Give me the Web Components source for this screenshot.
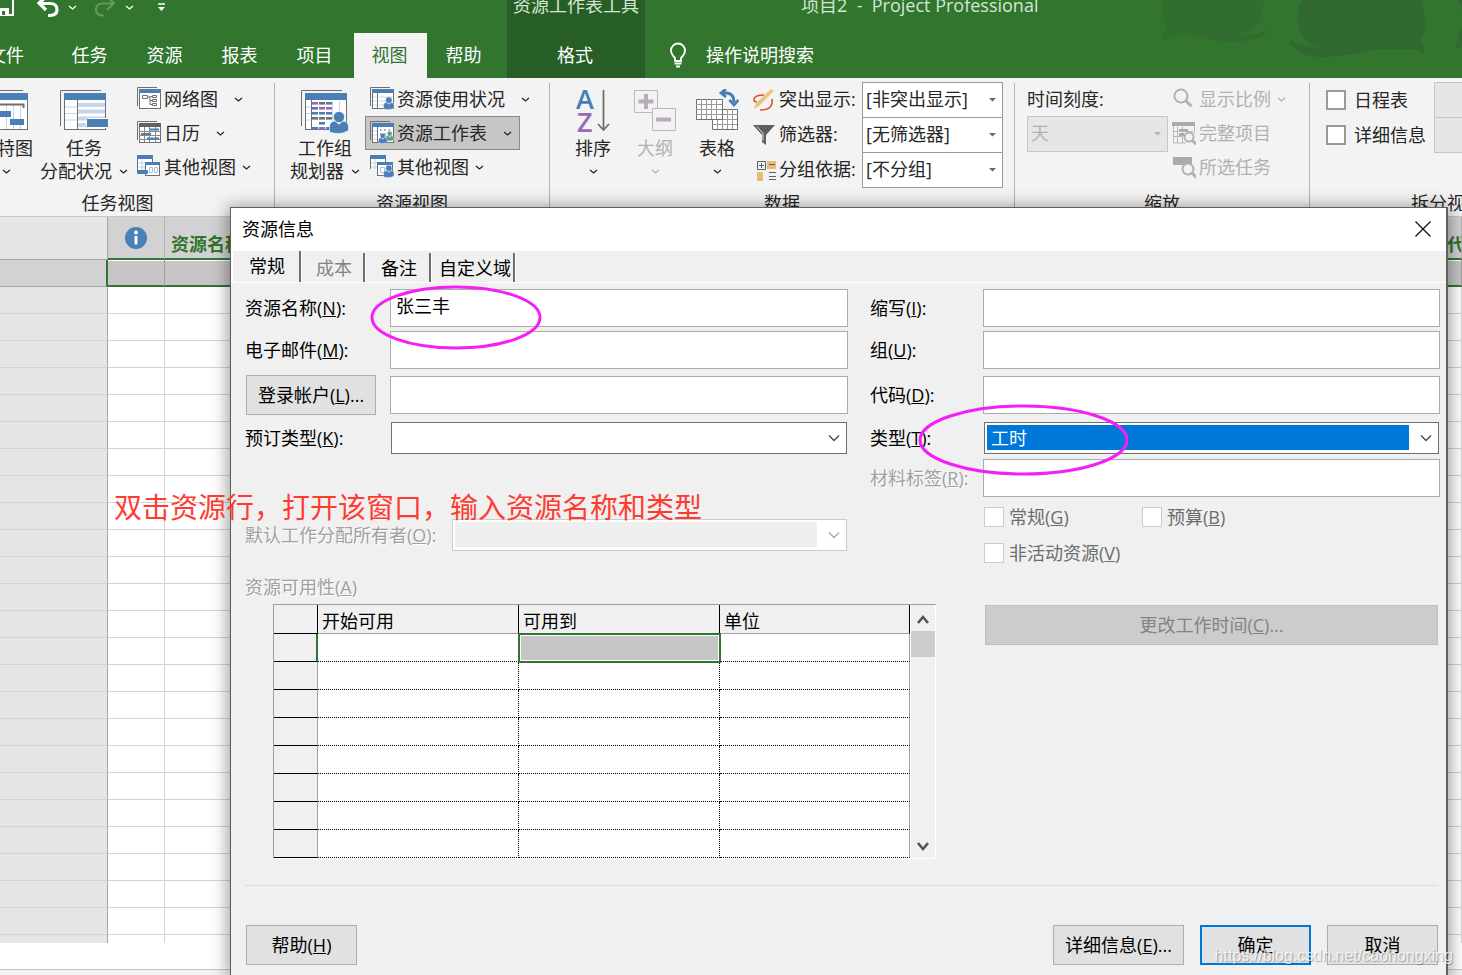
<!DOCTYPE html>
<html lang="zh-CN">
<head>
<meta charset="utf-8">
<title>项目2 - Project Professional</title>
<style>
  html, body { margin: 0; height: 100%; overflow: hidden; }
  body { font: 18px/24px "Open Sans", "Noto Sans CJK SC", sans-serif; color: #262626; background: #fff; }
</style>
</head>
<body>
<project-app></project-app>
<script>
const BLUE = '#4a7fb5', GREY = '#6f6f6f', PURPLE = '#9a68b8';
const person = (x, y, s, c) => `<g transform="translate(${x} ${y}) scale(${s})" fill="${c}" stroke="#fff" stroke-width=".6"><path d="M0 19V14Q0 8 6 8L9.500 11.500L13 8Q19 8 19 14V17.500Q14 20.500 9.500 20.500Q4 20.500 0 19Z"/><circle cx="9.500" cy="4" r="5.600"/></g>`;
const bigSheet = (inner, split = 17) => `<path d="M.5 37V1.500H41" fill="none" stroke="${GREY}"/><rect x="4.500" y="4.500" width="41" height="36" fill="#fff" stroke="${GREY}"/><path d="M5 18h${split - 5}M5 24.500h${split - 5}M5 31h${split - 5}" stroke="#c5d5ea"/><path d="M${split}.5 11V40" stroke="${GREY}"/>${inner}<path d="M4 4h42v7H4z" fill="${BLUE}"/>`;
const smallSheet = (inner, head = BLUE) => `<path d="M.5 19V.5H20" fill="none" stroke="${GREY}"/><rect x="2.500" y="2.500" width="21" height="19" fill="#fff" stroke="${GREY}"/>${inner}<path d="M2 2h22v4H2z" fill="${head}"/>`;
const lens = (x, y, r) => `<circle cx="${x}" cy="${y}" r="${r}" fill="#f3f3f3" stroke="#b1b1b1" stroke-width="2"/><path d="M${x + r * .7} ${y + r * .7}l${r * .9} ${r * .9}" stroke="#b1b1b1" stroke-width="3"/>`;
/* Coloured cells of the team planner, one letter per cell. */
const cells = ['pgb', 'bpp', 'bbb', 'ggg', '.b.', 'bpb'].map((row, r) => [...row].map((c, i) =>
  c === '.' ? '' : `<rect x="${11 + i * 7}" y="${13 + r * 5}" width="6" height="2.600" fill="${{ p: PURPLE, g: GREY, b: BLUE }[c]}"/>`).join('')).join('');

const ICONS = {
  save: [20, 20, `<path d="M1 1h17v17H4l-3-3z" fill="none" stroke="#fff" stroke-width="2"/><path d="M5 11h9v7H5z" fill="#fff"/><path d="M7 14h3v4H7z" fill="#31752f"/>`],
  undo: [24, 22, `<path d="M10 1L3 7l7 7M3 7.500h11q7 0 7 6t-7 6h-2" fill="none" stroke="#fff" stroke-width="3.200"/>`],
  redo: [24, 22, `<path d="M14 1l7 6-7 7M21 7.500H10Q3 7.500 3 13.500t7 6h1" fill="none" stroke="#5f9a5d" stroke-width="2.200"/>`],
  caret: [9, 9, `<path d="M1 3l3.500 3L8 3" fill="none" stroke="currentColor" stroke-width="1.300"/>`],
  chevron: [14, 14, `<path d="M2 4.500L7 9.500L12 4.500" fill="none" stroke="currentColor" stroke-width="1.300"/>`],
  triangle: [9, 9, `<path d="M1 3h7L4.500 6.500z" fill="currentColor"/>`],
  more: [9, 12, `<path d="M1 3h7" stroke="#fff" stroke-width="1.500"/><path d="M1 6h7L4.500 10z" fill="#fff"/>`],
  close: [18, 18, `<path d="M1.500 1.500l15 15M16.500 1.500l-15 15" stroke="#111" stroke-width="1.300"/>`],
  bulb: [18, 26, `<path d="M6 19v-3Q2 12 2 8.500A7 7 0 0 1 16 8.500Q16 12 12 16v3zM5.500 21.500h7M7 24.500h4" fill="none" stroke="#fff" stroke-width="1.800"/>`],
  info: [22, 22, `<circle cx="11" cy="11" r="11" fill="${BLUE}"/><circle cx="11" cy="5.500" r="1.900" fill="#fff"/><path d="M9.500 9h3v8.500h-3z" fill="#fff"/>`],
  gantt: [48, 44, bigSheet(`<path d="M24.500 15v25M31.500 15v25M38.500 15v25" stroke="#c5d5ea"/><path d="M8 18v-2.500h33.500V19" fill="none" stroke="${GREY}" stroke-width="2"/><rect x="14" y="22" width="15" height="6" fill="${BLUE}"/><rect x="28" y="30" width="14" height="6" fill="${BLUE}"/>`)],
  usage: [49, 44, bigSheet(`<path d="M18 16h27M18 22.500h27M18 29.500h27M18 36h27" stroke="#c5d5ea" stroke-width="4"/><rect x="26.500" y="29.500" width="22" height="9" rx="1" fill="${BLUE}" stroke="#fff"/>`)],
  planner: [49, 46, bigSheet(`<path d="M31.500 12v28M38.500 12v28" stroke="#c5d5ea"/>${cells}`, 10) + person(28.5, 24, 1, BLUE)],
  network: [24, 24, smallSheet(`<path d="M5.500 8.500h5v3h-5zM15.500 8.500h4v2h-4zM15.500 12.500h4v2h-4zM15.500 16.500h4v2h-4zM10.500 10h2.500v7.500h2.500M13 9.500h2.500M13 13.500h2.500" fill="none" stroke="${GREY}"/>`)],
  calendar: [24, 24, smallSheet(`<path d="M2 10.500h21M2 14.500h21M2 18.500h21M7.500 6v15M12.500 6v15M18.500 6v15" stroke="#888"/><path d="M12 8.500h10M4 13h10M10 17.500h12" stroke="${BLUE}" stroke-width="2"/>`, '#5f6368')],
  other: [24, 24, `<path d="M.5 17V.5H15.500V8" fill="#fff" stroke="${GREY}"/><path d="M0 0h16v4H0z" fill="${BLUE}"/><path d="M5 4v12M1 8h14M1 12h14" stroke="#c5d5ea"/><rect x="8.500" y="7.500" width="14" height="13" fill="#fff" stroke="${GREY}"/><path d="M8 7h15v3H8z" fill="${BLUE}"/><path d="M12.500 12.500h3v5h-3zM17.500 12.500h3v5h-3z" fill="none" stroke="#a9c0dc"/><rect y="15" width="11" height="4" rx="1" fill="${BLUE}"/>`],
  resusage: [24, 24, smallSheet(`<path d="M7.500 6v15" stroke="${GREY}"/><path d="M3 10h4M3 14h4M3 18h4M9 10h13M9 14h13M9 18h13" stroke="#c5d5ea"/>`) + person(13.5, 11, .56, BLUE)],
  ressheet: [24, 24, smallSheet(`<path d="M7.500 6v15" stroke="${GREY}"/><path d="M3 10h4M3 14h4M3 18h4" stroke="#c5d5ea"/><path d="M10 9h12M10 13h12" stroke="${GREY}" stroke-width="1.300" stroke-dasharray="1.300 3"/>`) + person(15.5, 11, .44, '#5fa287') + person(8.5, 13, .46, BLUE)],
  resother: [24, 24, `<path d="M.5 14V.5H15.500V8" fill="#fff" stroke="${GREY}"/><path d="M0 0h16v4H0z" fill="${BLUE}"/><path d="M5 4v10M1 8h14M1 12h14" stroke="#c5d5ea"/><rect x="7.500" y="7.500" width="15" height="13" fill="#fff" stroke="${GREY}"/><path d="M7 7h16v3H7z" fill="${BLUE}"/><path d="M10.500 12.500h4v5h-4z" fill="none" stroke="#a9c0dc"/>` + person(13.5, 11, .56, BLUE)],
  sort: [36, 46, `<text x="1" y="20" font-family="Open Sans, sans-serif" font-weight="600" font-size="27" fill="${BLUE}">A</text><text x="2" y="43" font-family="Open Sans, sans-serif" font-weight="600" font-size="27" fill="${PURPLE}">Z</text><path d="M28.500 1v40M23 35l5.500 6L34 35" fill="none" stroke="${GREY}" stroke-width="1.800"/>`],
  outline: [44, 46, `<g fill="#f6f0f6" stroke="#b9b9b9"><path d="M1.500 1.500h23v22h-23z"/><path d="M19.500 19.500h23v22h-23z"/></g><path d="M13 5v15M5.500 12.500h15M23 30.500h15" stroke="#b1b1b1" stroke-width="4"/>`],
  tables: [44, 46, `<path d="M17.500 20.500h25v20h-25z" fill="#fff" stroke="${GREY}"/><path d="M22.500 20v20M27.500 20v20M32.500 20v20M37.500 20v20M17 25.500h25M17 30.500h25M17 35.500h25" stroke="#999"/><path d="M1.500 10.500h26v20h-26z" fill="#fff" stroke="${GREY}"/><path d="M6.500 10v20M11.500 10v20M16.500 10v20M21.500 10v20M1 15.500h26M1 20.500h26M1 25.500h26" stroke="#999"/><path d="M27 4h5q7 1 7 9M31 0l-5 4 5 4M34.500 11l4.500 5 4.500-5" fill="none" stroke="${BLUE}" stroke-width="2.800"/>`],
  highlight: [24, 24, `<path d="M12 7Q2 7 2 12Q2 14 5 14M20 11Q22 22 8 22" fill="none" stroke="#d9532c" stroke-width="1.600"/><path d="M19 1l3 2L7 18l-5 3 2-6z" fill="#edc57c"/>`],
  filter: [24, 24, `<path d="M1 2h22L14 12v10l-4-3v-7z" fill="#5f5f5f"/><path d="M5 3.500l6 7v7" fill="none" stroke="#ddd"/>`],
  group: [24, 24, `<path d="M5.500 3.500h8v8h-8zM9.500 5v5M7 7.500h5M17 14.500h7M17 18.500h7M17 21.500h7" fill="none" stroke="#5f5f5f"/><path d="M15 3h9v8h-9zM5 14h6v9H5z" fill="#e8bd78"/><path d="M17 6.500h6" stroke="#5f5f5f"/>`],
  zoom: [24, 24, lens(9, 9, 6.5)],
  wholeproj: [24, 24, `<path d="M1.500 3v19H14M22.500 3v9M5.500 6v16M10.500 6v16M1 10.500h20M1 15.500h10" fill="none" stroke="#b9b9b9"/><path d="M0 1h23v4H0zM7 8h9v2H7zM7 12h5v3H7z" fill="#ababab"/>` + lens(17, 16, 4.5)],
  seltask: [24, 24, `<path d="M1 2h19v8H1z" fill="#ababab"/>` + lens(16, 14, 5.5)],
  scrollup: [26, 26, `<path d="M8 18l5-6 5 6" fill="none" stroke="#555" stroke-width="2.600"/>`],
  scrolldown: [26, 26, `<path d="M8 11l5 6 5-6" fill="none" stroke="#555" stroke-width="2.600"/>`]
};

/* Registers an element whose shadow root is rendered once from its attributes. */
function component(tag, css, html) {
  customElements.define(tag, class extends HTMLElement {
    connectedCallback() {
      if (this.shadowRoot) return;
      const t = document.createElement('template');
      t.innerHTML = `<style>*{box-sizing:border-box}button,input,select{font:inherit;color:inherit;margin:0;border-radius:0}${css}</style>` +
        (typeof html === 'function' ? html(n => this.getAttribute(n) || '', n => this.hasAttribute(n)) : html);
      this.attachShadow({ mode: 'open' }).append(t.content.cloneNode(true));
    }
  });
}
const keyed = (a) => `${a('label')}${a('key') ? `(<u>${a('key')}</u>)` : ''}${a('tail')}`;

component('ui-icon', ':host{display:block;flex:none;pointer-events:none}svg{display:block}', a => {
  const [w, h, body] = ICONS[a('name')];
  return `<svg width="${w}" height="${h}" viewBox="0 0 ${w} ${h}" aria-hidden="true">${body}</svg>`;
});

/* ---- ribbon ---- */
component('ribbon-tab', `
  :host{display:block;width:75px;flex:none}
  :host([first]){width:92px}
  :host([context]){width:138px}
  :host([active]){background:#f3f3f3;color:#31752f;width:73px;margin-left:1px}
  button{width:100%;height:45px;padding:0 2px 2px 0;border:0;background:none;white-space:nowrap}`,
  '<button type="button" role="tab"><slot></slot></button>');

component('app-header', `
  :host{display:block;position:relative;background:#31752f;color:#fff;flex:none}
  .title,.tabs{display:flex;position:relative}
  .title{height:33px;color:#d4e6d3}
  .quick{width:507px;display:flex;flex:none;height:22px;margin-top:-4px}
  .quick button{border:0;background:none;padding:0;display:flex;align-items:center;justify-content:flex-start;color:#fff}
  .b1{width:41px}.b2{width:32px}.b3{width:25px}.b4{width:32px}.b5{width:32px}
  .quick .b1{margin-left:-5px}
  .ctx{width:138px;flex:none;background:#275e26;text-align:center;white-space:nowrap}
  .ctx span,.doc span{display:block;margin-top:-7px}
  .doc{margin-left:156px;white-space:pre}
  .tabs{height:45px}
  nav{display:flex;margin-left:-39px;width:546px;flex:none}
  .dark{background:#275e26}
  .tell{display:flex;align-items:center;margin-left:24px;gap:19px;border:0;background:none;padding:0 0 2px}
  .art{position:absolute;right:0;top:0}`,
  `<svg class="art" width="302" height="78" viewBox="0 0 302 78" fill="#30682f" aria-hidden="true">
    <path opacity=".6" d="M4 0Q-1 18 8 27Q3 32 2 42Q12 32 36 37Q84 48 106 34Q112 30 106 31Q94 36 80 34Q106 28 103 0z"/>
    <path d="M140 4Q133 22 145 39Q150 45 162 47Q140 47 132 41Q128 41 131 45Q142 57 160 57Q190 56 218 49H246Q258 49 264 54Q265 44 260 40Q268 30 264 12L262 0H142z"/>
    <path d="M302 0h-4l4 10zM302 28Q297 36 296 49l6-3z"/></svg>
  <div class="title">
    <div class="quick">
      <button type="button" class="b1" aria-label="保存"><ui-icon name="save"></ui-icon></button>
      <button type="button" class="b2" aria-label="撤消"><ui-icon name="undo"></ui-icon></button>
      <button type="button" class="b3" aria-label="撤消列表"><ui-icon name="caret"></ui-icon></button>
      <button type="button" class="b4" aria-label="恢复"><ui-icon name="redo"></ui-icon></button>
      <button type="button" class="b5" aria-label="恢复列表"><ui-icon name="caret"></ui-icon></button>
      <button type="button" aria-label="自定义"><ui-icon name="more"></ui-icon></button>
    </div>
    <div class="ctx"><span>资源工作表工具</span></div>
    <div class="doc"><span>项目2  -  Project Professional</span></div>
  </div>
  <div class="tabs">
    <nav role="tablist">
      <ribbon-tab first>文件</ribbon-tab><ribbon-tab>任务</ribbon-tab><ribbon-tab>资源</ribbon-tab>
      <ribbon-tab>报表</ribbon-tab><ribbon-tab>项目</ribbon-tab><ribbon-tab active>视图</ribbon-tab><ribbon-tab>帮助</ribbon-tab>
    </nav>
    <ribbon-tab context class="dark">格式</ribbon-tab>
    <button type="button" class="tell"><ui-icon name="bulb"></ui-icon>操作说明搜索</button>
  </div>`);

component('ribbon-group', `
  :host{display:flex;flex-direction:column;flex:none;border-right:1px solid #b4b4b4;height:134px;width:275px}
  .items{display:flex;height:105px;align-items:flex-start}
  .name{height:24px;margin-top:3px;text-align:center}`,
  a => `<div class="items"><slot></slot></div><div class="name">${a('label')}</div>`);

component('big-button', `
  :host{display:block;flex:none}
  :host([off]){color:#b1b1b1}
  button{display:flex;flex-direction:column;align-items:center;width:100%;height:105px;padding:6px 0 0;border:0;background:none;line-height:23px;white-space:nowrap}
  ui-icon[name]{height:46px}
  .l2{display:flex;align-items:center;gap:7px;height:23px}
  .l2 ui-icon{height:9px}
  .l1{margin-top:2px}`,
  (a, h) => `<button type="button"${h('off') ? ' disabled' : ''} style="color:inherit"><ui-icon name="${a('icon')}"></ui-icon><span class="l1">${a('label')}</span><span class="l2">${a('second') ? `<span>${a('second')}</span>` : ''}<ui-icon name="caret"></ui-icon></span></button>`);

component('small-button', `
  :host{display:block}
  :host([off]){color:#b1b1b1}
  button{display:flex;align-items:center;height:34px;padding:0 7px 0 4px;gap:3px;border:1px solid transparent;background:none;color:inherit;white-space:nowrap}
  :host([pressed]) button{background:#c6c6c6;border-color:#8a8a8a}
  .c{margin-left:13px}
  :host([tight]) .c{margin-left:3px}`,
  (a, h) => `<button type="button"${h('off') ? ' disabled' : ''}><ui-icon name="${a('icon')}"></ui-icon><span>${a('label')}</span>${h('plain') ? '' : '<ui-icon class="c" name="caret"></ui-icon>'}</button>`);

component('ribbon-select', `
  :host{display:flex;align-items:center;height:35px}
  :host([off]){color:#b1b1b1;height:35px}
  ui-icon.lead{margin-right:3px}
  label{width:83px;white-space:nowrap;padding-bottom:2px}
  .box{position:relative;flex:1}
  select{appearance:none;width:100%;height:36px;border:1px solid #999;background:#fff;padding:0 20px 2px 3px;opacity:1;display:block}
  :host([off]) select{background:#e6e6e6;border-color:#c6c6c6}
  .arrow{position:absolute;right:6px;top:13px;color:#666}
  :host([off]) .arrow{color:#b1b1b1}`,
  (a, h) => `${a('icon') ? `<ui-icon class="lead" name="${a('icon')}"></ui-icon>` : ''}${a('label') ? `<label for="s">${a('label')}</label>` : ''}
  <div class="box"><select id="s"${h('off') ? ' disabled' : ''}${a('label') ? '' : ` aria-label="${a('name')}"`}><option>${a('value')}</option></select><ui-icon class="arrow" name="triangle"></ui-icon></div>`);

component('check-item', `
  :host{display:flex;align-items:center;gap:8px;white-space:nowrap}
  input{appearance:none;width:20px;height:20px;border:2px solid #999;background:#fff;flex:none}
  :host([off]){color:#6d6d6d;gap:5px}
  :host([off]) input{border:1px solid #ccc}`,
  (a, h) => `<input id="c" type="checkbox"${h('off') ? ' disabled' : ''}><label for="c">${keyed(a)}</label>`);

component('app-ribbon', `
  :host{display:flex;background:#f3f3f3;height:139px;padding-top:5px;border-bottom:1px solid #c6c6c6;overflow:hidden;flex:none}
  .first{margin-left:-39px;width:314px}
  .data{width:465px}.zoom{width:295px}
  .stack{display:flex;flex-direction:column;align-items:flex-start;margin-top:-1px}
  .selects{width:251px}
  .selects>*{width:100%}
  .scale{width:140px;margin-left:12px}
  .scale ribbon-select{width:141px}
  .cap{height:34px;line-height:34px}
  .checks{margin-left:16px;width:108px}
  .checks check-item{height:35px}
  .off{width:160px;flex:none}
  .off ribbon-select{width:100%}`,
  `<ribbon-group class="first" label="任务视图">
    <big-button icon="gantt" label="甘特图" style="width:62px;margin-left:14px"></big-button>
    <big-button icon="usage" label="任务" second="分配状况" style="width:92px;margin-left:1px"></big-button>
    <div class="stack" style="margin-left:2px">
      <small-button icon="network" label="网络图"></small-button>
      <small-button icon="calendar" label="日历"></small-button>
      <small-button tight icon="other" label="其他视图"></small-button>
    </div>
  </ribbon-group>
  <ribbon-group label="资源视图">
    <big-button icon="planner" label="工作组" second="规划器" style="width:76px;margin-left:12px"></big-button>
    <div class="stack" style="margin-left:2px">
      <small-button icon="resusage" label="资源使用状况"></small-button>
      <small-button pressed icon="ressheet" label="资源工作表"></small-button>
      <small-button tight icon="resother" label="其他视图"></small-button>
    </div>
  </ribbon-group>
  <ribbon-group class="data" label="数据">
    <big-button icon="sort" label="排序" style="width:62px;margin-left:12px"></big-button>
    <big-button off icon="outline" label="大纲" style="width:62px"></big-button>
    <big-button icon="tables" label="表格" style="width:62px"></big-button>
    <div class="stack selects" style="margin-left:4px">
      <ribbon-select icon="highlight" label="突出显示:" value="[非突出显示]"></ribbon-select>
      <ribbon-select icon="filter" label="筛选器:" value="[无筛选器]"></ribbon-select>
      <ribbon-select icon="group" label="分组依据:" value="[不分组]"></ribbon-select>
    </div>
  </ribbon-group>
  <ribbon-group class="zoom" label="缩放">
    <div class="stack scale">
      <div class="cap">时间刻度:</div>
      <ribbon-select off name="时间刻度" value="天"></ribbon-select>
    </div>
    <div class="stack">
      <small-button off tight icon="zoom" label="显示比例"></small-button>
      <small-button off plain icon="wholeproj" label="完整项目"></small-button>
      <small-button off plain icon="seltask" label="所选任务"></small-button>
    </div>
  </ribbon-group>
  <ribbon-group label="拆分视图">
    <div class="stack checks" style="flex:none">
      <check-item label="日程表"></check-item>
      <check-item label="详细信息"></check-item>
    </div>
    <div class="stack off">
      <ribbon-select off name="日程表视图" value=""></ribbon-select>
      <ribbon-select off name="详细信息视图" value=""></ribbon-select>
    </div>
  </ribbon-group>`);

/* ---- resource sheet behind the dialog ---- */
component('resource-sheet', `
  :host{display:block;flex:1;overflow:hidden;min-height:0}
  table{width:100%;table-layout:fixed;border-collapse:separate;border-spacing:0}
  th,td{padding:0;height:27px;border-right:1px solid #d4d4d4;border-bottom:1px solid #d4d4d4;background:#fff}
  thead th{height:43px;background:#d2d2d2;border-right-color:#b4b4b4;border-bottom:2px solid #31752f;color:#31752f;font-weight:700;text-align:left;padding:13px 0 0 6px;white-space:nowrap;overflow:hidden;line-height:24px}
  thead th:nth-child(2){padding:0 0 0 17px}
  thead th:last-child{padding-left:1px}
  th:first-child{background:#e6e6e6;border-right-color:#a6a6a6}
  thead th:first-child{border-bottom:1px solid #a6a6a6}
  .sel th:first-child{background:#d2d2d2;border-bottom-color:#a6a6a6;border-right:2px solid #31752f}
  .sel td{background:#c6c6c6;border-right-color:#a0a0a0;border-bottom:2px solid #31752f;box-shadow:inset 0 1px #fff}`,
  `<table aria-label="资源工作表"><colgroup><col style="width:108px"><col style="width:57px"><col><col style="width:16px"></colgroup>
  <thead><tr><th></th><th><ui-icon name="info"></ui-icon></th><th>资源名称</th><th>代码</th></tr></thead>
  <tbody><tr class="sel"><th></th><td></td><td></td><td></td></tr>${'<tr><th></th><td></td><td></td><td></td></tr>'.repeat(40)}</tbody></table>`);

/* ---- dialog ---- */
component('push-button', `
  :host{display:block;color:#000}
  button{width:100%;height:40px;padding:0 10px;border:1px solid #adadad;background:#e1e1e1;white-space:nowrap}
  :host([primary]) button{border:2px solid #0078d7}
  :host([off]) button{background:#ccc;border-color:#bfbfbf;color:#838383}`,
  (a, h) => `<button type="button"${h('off') ? ' disabled' : ''}>${keyed(a)}</button>`);

component('form-field', `
  :host{display:flex;align-items:center;color:#000}
  label,.lab{width:var(--label,145px);flex:none;white-space:nowrap}
  .lab push-button{width:130px;margin-left:1px}
  :host([off]) label{color:#a0a0a0;text-shadow:1px 1px #fff}
  input{flex:1;min-width:0;height:38px;border:1px solid #ababab;background:#fff;padding:0 5px 6px}
  .box{flex:1;position:relative;margin:0 1px;background:#fff}
  select{appearance:none;display:block;width:100%;height:32px;border:1px solid #707070;padding:2px 29px 3px 2px;background:#fff content-box;text-indent:4px;opacity:1;outline:0}
  :host([chosen]) select{background-color:#0078d7;color:#fff}
  :host([off]) select{background-color:#efefef;border-color:#ccc}
  .box ui-icon{position:absolute;right:6px;top:9px;color:#444}
  :host([off]) .box ui-icon{color:#aaa}`,
  (a, h) => {
    const off = h('off') && h('select') ? ' disabled' : '';
    const lab = h('button') ? `<span class="lab"><push-button label="${a('label')}" key="${a('key')}" tail="..."></push-button></span>` : `<label for="f">${keyed(a)}</label>`;
    return lab + (h('select')
      ? `<div class="box"><select id="f"${off}><option>${a('value')}</option></select><ui-icon name="chevron"></ui-icon></div>`
      : `<input id="f" type="text" value="${a('value')}"${h('button') ? ` aria-label="${a('label')}"` : ''}>`);
  });

component('availability-table', `
  :host{display:flex;color:#000;border-top:1px solid #a0a0a0;border-left:1px solid #a0a0a0;border-bottom:1px solid #fff}
  table{flex:1;table-layout:fixed;border-collapse:separate;border-spacing:0}
  th,td{height:28px;padding:0;border-right:1px dotted #000;border-bottom:1px dotted #000;background:#fff}
  th{font-weight:400;background:#f0f0f0;border-bottom:1px solid #000;border-right:1px solid #000}
  thead th{height:29px;text-align:left;padding:4px 0 0 4px;border-bottom-color:#a0a0a0}
  thead th:first-child{border-bottom-color:#000}
  tbody th{border-right-color:#a0a0a0}
  td:last-child{border-right:1px solid #a0a0a0}
  .now th{border-right:2px solid #31752f}
  .now td:nth-child(3){background:#c6c6c6;outline:2px solid #31752f;outline-offset:-1px;border-color:transparent;box-shadow:inset 2px 2px #fff,inset -1px -1px #fff}
  .bar{width:26px;display:flex;flex-direction:column;background:#f0f0f0;border-left:1px solid #fff;border-right:1px solid #fff}
  .bar ui-icon{margin-left:-1px}
  .thumb{height:26px;background:#cdcdcd}
  .grow{flex:1}`,
  `<table aria-label="资源可用性"><colgroup><col style="width:44px"><col style="width:201px"><col style="width:201px"><col></colgroup>
  <thead><tr><th></th><th>开始可用</th><th>可用到</th><th>单位</th></tr></thead>
  <tbody><tr class="now"><th></th><td></td><td></td><td></td></tr>${'<tr><th></th><td></td><td></td><td></td></tr>'.repeat(7)}</tbody></table>
  <div class="bar"><ui-icon name="scrollup"></ui-icon><div class="thumb"></div><div class="grow"></div><ui-icon name="scrolldown"></ui-icon></div>`);

component('resource-dialog', `
  :host{display:block;background:#f0f0f0;border:1px solid #5f5f5f;border-right-width:2px;border-bottom:0;box-shadow:0 2px 16px 2px rgba(0,0,0,.4);color:#000}
  header{display:flex;justify-content:space-between;align-items:center;background:#fff;height:43px;padding:0 14px 2px 11px}
  header button{border:0;background:none;padding:0}
  .tabs{display:flex;align-items:flex-end;height:32px;border-bottom:1px solid #fff;border-left:2px solid #fff}
  .tabs button{border:0;border-right:2px solid #6d6d6d;background:none;height:29px;padding:0 12px;box-shadow:1px 0 #fff;width:66px;text-align:right}
  .tabs .on{height:31px;width:68px;padding-right:14px;padding-bottom:1px}
  .tabs .off{width:64px;color:#838383;padding-right:11px}
  .tabs .wide{width:84px;padding:0 2px}
  .body{display:grid;grid-template-columns:603fr 570fr;column-gap:22px;padding:6px 6px 0 14px}
  .col{display:flex;flex-direction:column;min-width:0}
  .right{--label:113px}
  .checks{display:grid;grid-template-columns:158px 1fr;row-gap:16px;margin:10px 0 42px 114px}
  .checks check-item{height:20px}
  .cap{color:#a0a0a0;text-shadow:1px 1px #fff;margin:24px 0 5px}
  .avail{margin:0 -88px 0 28px}
  footer{display:flex;gap:16px;margin:26px 8px 0 14px;padding:39px 0 10px 1px;border-top:1px solid #dcdcdc}
  footer push-button{width:111px}
  footer .info{width:131px;margin-left:auto}`,
  `<header><span>资源信息</span><button type="button" aria-label="关闭"><ui-icon name="close"></ui-icon></button></header>
  <div class="tabs" role="tablist"><button type="button" role="tab" class="on">常规</button><button type="button" role="tab" class="off" disabled>成本</button><button type="button" role="tab">备注</button><button type="button" role="tab" class="wide">自定义域</button></div>
  <div class="body">
    <div class="col">
      <form-field label="资源名称" key="N" tail=":" value="张三丰" style="margin-bottom:4px"></form-field>
      <form-field label="电子邮件" key="M" tail=":" style="margin-bottom:6px"></form-field>
      <form-field button label="登录帐户" key="L" style="margin-bottom:7px"></form-field>
      <form-field select label="预订类型" key="K" tail=":" style="margin-bottom:65px"></form-field>
      <form-field select off label="默认工作分配所有者" key="O" tail=":" style="--label:206px"></form-field>
      <div class="cap">资源可用性(<u>A</u>)</div>
      <availability-table class="avail"></availability-table>
    </div>
    <div class="col right">
      <form-field label="缩写" key="I" tail=":" style="margin-bottom:4px"></form-field>
      <form-field label="组" key="U" tail=":" style="margin-bottom:7px"></form-field>
      <form-field label="代码" key="D" tail=":" style="margin-bottom:8px"></form-field>
      <form-field select chosen label="类型" key="T" tail=":" value="工时" style="margin-bottom:5px"></form-field>
      <form-field off label="材料标签" key="R" tail=":"></form-field>
      <div class="checks">
        <check-item off label="常规" key="G"></check-item><check-item off label="预算" key="B"></check-item>
        <check-item off label="非活动资源" key="V"></check-item>
      </div>
      <push-button off label="更改工作时间" key="C" tail="..." style="margin:0 2px 0 115px"></push-button>
    </div>
  </div>
  <footer><push-button label="帮助" key="H"></push-button><push-button class="info" label="详细信息" key="E" tail="..."></push-button><push-button primary label="确定"></push-button><push-button label="取消"></push-button></footer>`);

component('project-app', `
  :host{display:flex;flex-direction:column;height:100vh;position:relative;overflow:hidden}
  .status{flex:none;height:6px;margin-top:26px;border-top:1px solid #c6c6c6;background:#f3f3f3}
  resource-dialog{position:absolute;left:230px;right:14px;top:207px;bottom:0}
  svg,.note,.mark{position:absolute;pointer-events:none}
  svg{left:0;top:0;width:100%;height:100%;fill:none;stroke:#f41ff4;stroke-width:3}
  .note{left:114px;top:487px;font-size:28px;line-height:40px;color:#ff3b30;white-space:nowrap}
  .mark{right:9px;bottom:7px;font:16px/24px "Liberation Sans",sans-serif;color:rgba(255,255,255,.75);text-shadow:1px 1px 1px rgba(0,0,0,.3)}`,
  `<app-header></app-header><app-ribbon></app-ribbon><resource-sheet></resource-sheet><div class="status"></div>
  <resource-dialog role="dialog" aria-label="资源信息"></resource-dialog>
  <svg aria-hidden="true"><ellipse cx="456" cy="317.500" rx="84" ry="30.500"/><ellipse cx="1023.500" cy="440" rx="103.500" ry="34"/></svg>
  <div class="note">双击资源行，打开该窗口，输入资源名称和类型</div>
  <div class="mark">https://blog.csdn.net/caohongxing</div>`);
</script>
</body>
</html>
